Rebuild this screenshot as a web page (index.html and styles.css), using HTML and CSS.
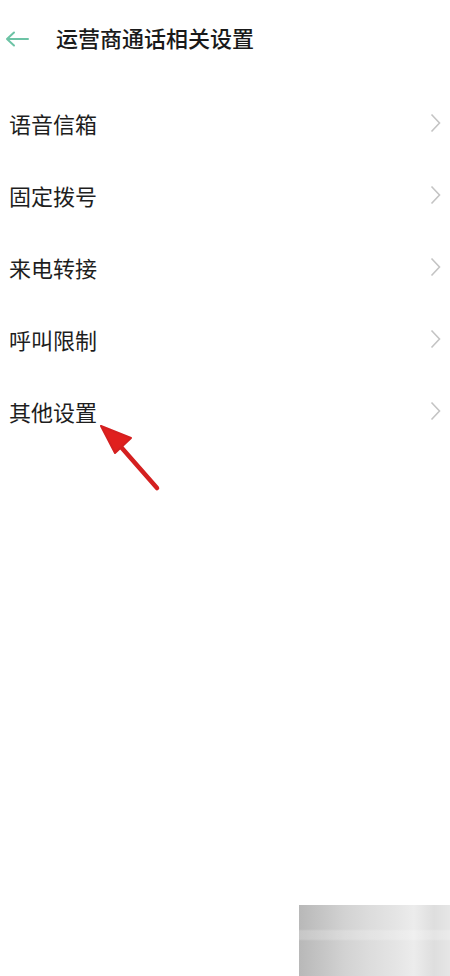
FILE: index.html
```html
<!DOCTYPE html>
<html lang="zh-CN">
<head>
<meta charset="utf-8">
<link rel="stylesheet" href="styles.css">
</head>
<body>
<div class="page">
  <header class="header">
    <svg class="back" width="26" height="16" viewBox="0 0 26 16"><path d="M24 8H3M10 1.5L3 8l7 6.5" fill="none" stroke="#6cc3a5" stroke-width="2" stroke-linecap="round" stroke-linejoin="round"/></svg>
    <h1 class="title">运营商通话相关设置</h1>
  </header>
  <ul class="list">
    <li class="row"><span>语音信箱</span><svg class="chev" width="11" height="20" viewBox="0 0 11 20"><path d="M1.5 1.5L9.5 10l-8 8.5" fill="none" stroke="#c4c4c4" stroke-width="1.6"/></svg></li>
    <li class="row"><span>固定拨号</span><svg class="chev" width="11" height="20" viewBox="0 0 11 20"><path d="M1.5 1.5L9.5 10l-8 8.5" fill="none" stroke="#c4c4c4" stroke-width="1.6"/></svg></li>
    <li class="row"><span>来电转接</span><svg class="chev" width="11" height="20" viewBox="0 0 11 20"><path d="M1.5 1.5L9.5 10l-8 8.5" fill="none" stroke="#c4c4c4" stroke-width="1.6"/></svg></li>
    <li class="row"><span>呼叫限制</span><svg class="chev" width="11" height="20" viewBox="0 0 11 20"><path d="M1.5 1.5L9.5 10l-8 8.5" fill="none" stroke="#c4c4c4" stroke-width="1.6"/></svg></li>
    <li class="row"><span>其他设置</span><svg class="chev" width="11" height="20" viewBox="0 0 11 20"><path d="M1.5 1.5L9.5 10l-8 8.5" fill="none" stroke="#c4c4c4" stroke-width="1.6"/></svg></li>
  </ul>
  <svg class="pointer" width="70" height="75" viewBox="0 0 70 75"><path d="M58 64L22 23" stroke="#d42020" stroke-width="4.5" stroke-linecap="round"/><path d="M2 2L32 14L16 29Z" fill="#e0201e" stroke="#d42020" stroke-width="2" stroke-linejoin="round"/></svg>
  <div class="mosaic"></div>
</div>
</body>
</html>
```
FILE: styles.css
```css
html, body {
  margin: 0;
  padding: 0;
  background: #ffffff;
}
body {
  font-family: "Noto Sans CJK SC", "Noto Sans", sans-serif;
  color: #1c1c1c;
}
.page {
  position: relative;
  width: 450px;
  height: 976px;
  overflow: hidden;
}
.header {
  height: 74px;
  display: flex;
  align-items: center;
  padding-left: 4px;
  box-sizing: border-box;
}
.back {
  display: block;
  margin-top: 3px;
}
.title {
  margin: 0 0 0 26px;
  font-size: 22px;
  font-weight: 500;
  line-height: 30px;
  color: #1a1a1a;
}
.list {
  list-style: none;
  margin: 13px 0 0 0;
  padding: 0;
}
.row {
  height: 72px;
  display: flex;
  align-items: center;
  justify-content: space-between;
  padding: 0 9px 0 9px;
  font-size: 22px;
  color: #1e1e1e;
}
.row span {
  line-height: 30px;
}
.chev {
  display: block;
}
.pointer {
  position: absolute;
  left: 99px;
  top: 424px;
}
.mosaic {
  position: absolute;
  left: 299px;
  top: 905px;
  width: 151px;
  height: 71px;
  background:
    linear-gradient(180deg, rgba(255,255,255,0) 0px, rgba(255,255,255,0) 24px, rgba(255,255,255,0.2) 26px, rgba(255,255,255,0.2) 34px, rgba(255,255,255,0) 36px),
    linear-gradient(90deg, #b8b8b8 0px, #c6c6c6 25px, #d2d2d2 45px, #dcdcdc 70px, #e4e4e4 95px, #ececec 115px, #dedede 135px, #e6e6e6 151px);
}
```
